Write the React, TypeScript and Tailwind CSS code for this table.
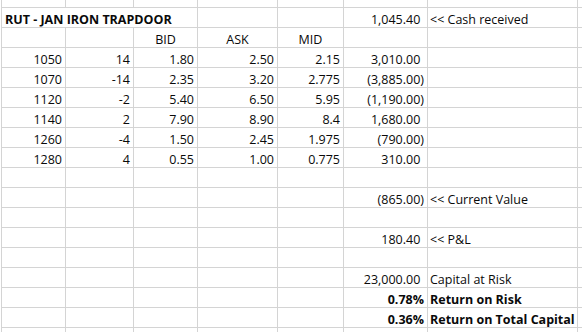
import React from "react";

type Cell = { t?: React.ReactNode; a?: "l" | "r" | "c"; b?: boolean };

const colW = [
  "w-[64px]",
  "w-[68px]",
  "w-[64px]",
  "w-[80px]",
  "w-[66px]",
  "w-[84px]",
  "w-[150px]",
];

const line = "border-[#d4d4d4]";

function Acc({ v }: { v: string }) {
  if (v.startsWith("(")) return <>{v}</>;
  return (
    <>
      {v}
      <span className="invisible">)</span>
    </>
  );
}

function GridCell({ c, w }: { c?: Cell; w: string }) {
  const align =
    c?.a === "r" ? "justify-end pr-[3px]" : c?.a === "c" ? "justify-center" : "justify-start pl-[2px]";
  return (
    <div
      className={`${w} shrink-0 h-full border-l ${line} flex items-end ${align} whitespace-nowrap ${
        c?.b ? "font-bold" : ""
      }`}
    >
      {c?.t !== undefined ? <span className="leading-[14px]">{c.t}</span> : null}
    </div>
  );
}

function Row({ cells = [] }: { cells?: (Cell | undefined)[] }) {
  return (
    <div className={`flex h-[20px] border-t ${line}`}>
      {colW.map((w, i) => (
        <GridCell key={i} c={cells[i]} w={w} />
      ))}
      <div className={`flex-1 h-full border-l ${line}`} />
    </div>
  );
}

const data = [
  ["1050", "14", "1.80", "2.50", "2.15", "3,010.00"],
  ["1070", "-14", "2.35", "3.20", "2.775", "(3,885.00)"],
  ["1120", "-2", "5.40", "6.50", "5.95", "(1,190.00)"],
  ["1140", "2", "7.90", "8.90", "8.4", "1,680.00"],
  ["1260", "-4", "1.50", "2.45", "1.975", "(790.00)"],
  ["1280", "4", "0.55", "1.00", "0.775", "310.00"],
];

const E = undefined;

export default function App() {
  return (
    <div
      className="w-[582px] h-[332px] overflow-hidden bg-white pl-px text-[#0a0a0a] text-[12.5px]"
      style={{ fontFamily: "'Open Sans', Lato, sans-serif" }}
    >
      <div className="flex h-[7px]">
        {colW.map((w, i) => (
          <div key={i} className={`${w} shrink-0 h-full border-l ${line}`} />
        ))}
        <div className={`flex-1 h-full border-l ${line}`} />
      </div>

      <div className={`flex h-[20px] border-t ${line}`}>
        <div
          className={`w-[196px] shrink-0 h-full border-l ${line} flex items-end pl-[3px] whitespace-nowrap font-bold`}
        >
          <span className="leading-[14px]">RUT - JAN IRON TRAPDOOR</span>
        </div>
        <GridCell w={colW[3]} />
        <GridCell w={colW[4]} />
        <GridCell w={colW[5]} c={{ t: <Acc v="1,045.40" />, a: "r" }} />
        <GridCell w={colW[6]} c={{ t: "<< Cash received" }} />
        <div className={`flex-1 h-full border-l ${line}`} />
      </div>

      <Row cells={[E, E, { t: "BID", a: "c" }, { t: "ASK", a: "c" }, { t: "MID", a: "c" }]} />

      {data.map((r, i) => (
        <Row
          key={i}
          cells={[
            { t: r[0], a: "r" },
            { t: r[1], a: "r" },
            { t: r[2], a: "r" },
            { t: r[3], a: "r" },
            { t: r[4], a: "r" },
            { t: <Acc v={r[5]} />, a: "r" },
          ]}
        />
      ))}

      <Row />
      <Row cells={[E, E, E, E, E, { t: <Acc v="(865.00)" />, a: "r" }, { t: "<< Current Value" }]} />
      <Row />
      <Row cells={[E, E, E, E, E, { t: <Acc v="180.40" />, a: "r" }, { t: "<< P&L" }]} />
      <Row />
      <Row cells={[E, E, E, E, E, { t: <Acc v="23,000.00" />, a: "r" }, { t: "Capital at Risk" }]} />
      <Row cells={[E, E, E, E, E, { t: "0.78%", a: "r", b: true }, { t: "Return on Risk", b: true }]} />
      <Row
        cells={[E, E, E, E, E, { t: "0.36%", a: "r", b: true }, { t: "Return on Total Capital", b: true }]}
      />
      <Row />
    </div>
  );
}
